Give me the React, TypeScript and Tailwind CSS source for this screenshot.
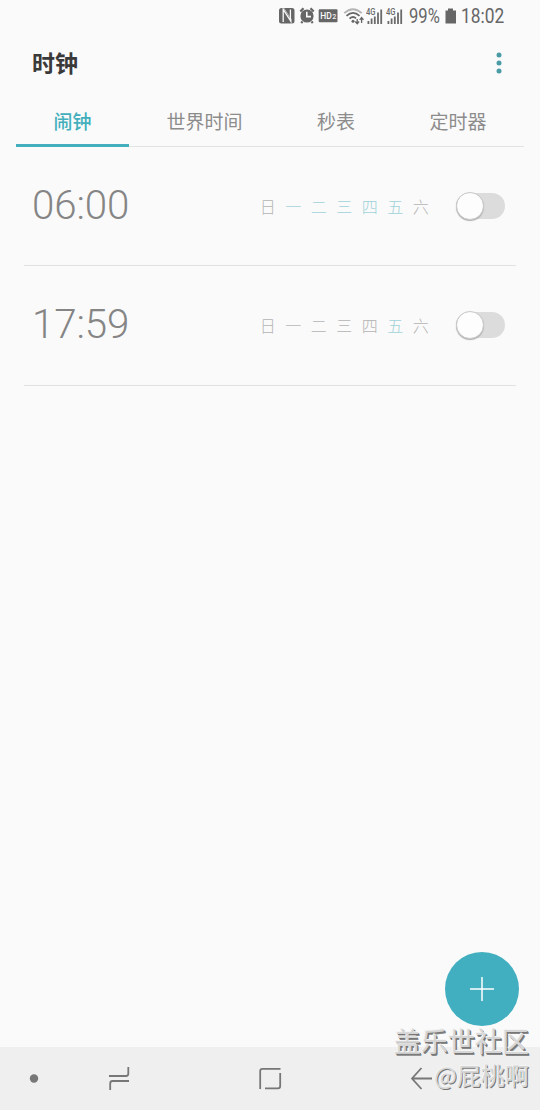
import React from "react";

const cjk = "font-['Noto_Sans_CJK_SC',sans-serif]";

function Signal() {
  return (
    <svg className="shrink-0" width="18" height="18" viewBox="0 0 18 18" fill="#6a6a6a">
      <text x="0" y="8.3" fontSize="8.5" fontWeight="500" textLength="9.5" lengthAdjust="spacingAndGlyphs" fontFamily="Roboto, sans-serif">4G</text>
      <rect x="1.5" y="14" width="1.8" height="3" />
      <rect x="4.7" y="11.5" width="1.8" height="5.5" />
      <rect x="7.9" y="9.5" width="1.8" height="7.5" />
      <rect x="11.1" y="5.5" width="1.8" height="11.5" />
      <rect x="14.3" y="2.5" width="1.8" height="14.5" />
    </svg>
  );
}

function StatusBar() {
  return (
    <div className="flex h-8 items-center text-[#666]">
      <svg className="ml-[278px] shrink-0" width="88" height="20" viewBox="278 6 88 20" fill="#666">
        <rect x="279" y="8" width="15.5" height="15.5" rx="2.5" />
        <path d="M283.2 22V9.5L290.4 20.5V9.5" fill="none" stroke="#fafafa" strokeWidth="1.3" />
        <path d="M283.7 8L291.3 19.5V23.5" fill="none" stroke="#fafafa" strokeWidth="0.6" />
        <circle cx="307" cy="16" r="6.6" />
        <path d="M300.3 11.5l3.2-3.2M313.7 11.5l-3.2-3.2M302.5 21.5l-1.3 1.5M311.5 21.5l1.3 1.5" stroke="#666" strokeWidth="2.2" />
        <path d="M306.8 11.8V16.6H311" fill="none" stroke="#fafafa" strokeWidth="1.6" />
        <rect x="318.7" y="9.3" width="18.8" height="13" rx="1" />
        <text x="320.3" y="19.3" fontSize="9.5" fontWeight="500" fill="#fafafa" textLength="11.5" lengthAdjust="spacingAndGlyphs" fontFamily="Roboto, sans-serif">HD</text>
        <text x="332.3" y="19.3" fontSize="7" fontWeight="500" fill="#fafafa" fontFamily="Roboto, sans-serif">2</text>
        <g fill="none" strokeWidth="1.8">
          <path d="M344.2 13.2Q353 5.2 361.8 13.2" stroke="#b5b5b5" />
          <path d="M346.5 15.8Q353 10 359.5 15.8M349.5 18.7Q353 15.5 356 18.3" stroke="#666" />
        </g>
        <circle cx="353" cy="21.2" r="1.5" />
        <path d="M357.2 19v4.5M355.3 21.5l1.9 2.2 1.9-2.2M361.6 23v-5M359.7 19.8l1.9-2.2 1.9 2.2" fill="none" stroke="#666" strokeWidth="1.3" />
      </svg>
      <div className="flex gap-[2px]"><Signal /><Signal /></div>
      <span className="ml-[5px] w-[36px] origin-left scale-x-[.85] pt-[2px] font-[Roboto] text-[19.5px] leading-5">99%</span>
      <svg className="shrink-0" width="12" height="16" viewBox="0 0 12 16" fill="#666"><path d="M3 .5h5v2h3v13H.5v-13H3z" /></svg>
      <span className="ml-1 origin-left scale-x-[.89] pt-[2px] font-[Roboto] text-[19.5px] leading-5">18:02</span>
    </div>
  );
}

const days = ["日", "一", "二", "三", "四", "五", "六"];

function Alarm({ time, active }: { time: string; active: number[] }) {
  return (
    <div className="flex items-center pl-2 pr-[11px]">
      <span className="w-[223px] font-[Roboto] text-[40.3px] font-light leading-[40px] tracking-[-0.1px] text-[#858585]">{time}</span>
      <div className="flex">
        {days.map((d, i) => (
          <span key={d} className={active.includes(i) ? "w-[25.5px] text-center text-[16px] font-light leading-6 text-[#9fd2d9]" : "w-[25.5px] text-center text-[16px] font-light leading-6 text-[#b4b4b4]"}>{d}</span>
        ))}
      </div>
      <div className="ml-auto flex h-[26px] w-[49px] items-center rounded-full bg-[#dcdcdc]">
        <div className="size-7 shrink-0 rounded-full border border-[#c8c8c8] bg-[#fdfdfd] shadow-[0_1px_1px_#b0b0b0]" />
      </div>
    </div>
  );
}

export default function App() {
  return (
    <div className={`relative flex h-[1110px] w-[540px] flex-col overflow-hidden bg-[#fafafa] ${cjk}`}>
      <StatusBar />
      <header className="flex h-[62px] items-center justify-between pl-8 pr-[37px]">
        <h1 className="pb-[2px] text-[23px] font-bold leading-none text-[#3a3a3a]">时钟</h1>
        <svg width="8" height="24" viewBox="0 0 8 24" fill="#4a9ba5"><circle cx="4" cy="4" r="2.5" /><circle cx="4" cy="12" r="2.5" /><circle cx="4" cy="20" r="2.5" /></svg>
      </header>
      <nav className="mx-4 flex h-[53px] border-b border-[#e3e3e3] text-[19px] leading-[54px] text-[#8c8c8c]">
        <span className="h-[53px] w-[113px] border-b-[3px] border-[#43afbc] text-center font-medium text-[#43afbc]">闹钟</span>
        <span className="w-[151px] text-center">世界时间</span>
        <span className="w-[112px] text-center">秒表</span>
        <span className="w-[132px] text-center">定时器</span>
      </nav>
      <main className="flex-1 px-6">
        <div className="grid h-[119px] items-center border-b border-[#e1e1e1]">
          <Alarm time="06:00" active={[1, 2, 3, 4, 5]} />
        </div>
        <div className="grid h-[120px] items-center border-b border-[#e1e1e1] pb-[1px]">
          <Alarm time="17:59" active={[5]} />
        </div>
      </main>
      <button className="absolute left-[445px] top-[952px] flex size-[74px] items-center justify-center rounded-full bg-[#41afbf]">
        <svg width="26" height="26" viewBox="0 0 26 26" stroke="#fff" strokeWidth="1.5"><path d="M13 1v24M1 13h24" /></svg>
      </button>
      <footer className="h-[63px] bg-[#efefef]">
        <svg width="540" height="63" viewBox="0 1047 540 63" fill="none" stroke="#777" strokeWidth="1.8">
          <circle cx="34" cy="1078.5" r="4.2" fill="#777" stroke="none" />
          <path d="M109 1076H126Q128.3 1076 128.3 1073.5V1067M129 1081H112.5Q110.2 1081 110.2 1083.5V1090" />
          <path d="M260.2 1089V1071Q260.2 1068.8 262.5 1068.8H280.5M280.2 1073V1086Q280.2 1088.3 278 1088.3H265" />
          <path d="M432 1078.5H412.5M421.5 1068L412 1078.5L421.5 1089" />
        </svg>
      </footer>
      <div className="absolute right-[11px] top-[1026px] text-right text-[#d6d6d6] [text-shadow:-1px_-1px_0_#f4f4f4,1px_1px_0_#777]">
        <div className="text-[27px] leading-[29px] [text-shadow:-1px_-1px_0_#f4f4f4,1px_1px_0_#777,1.5px_1.5px_0_#888]">盖乐世社区</div>
        <div className="mt-[6px] text-[24px] leading-[28px]">@屁桃啊</div>
      </div>
    </div>
  );
}
